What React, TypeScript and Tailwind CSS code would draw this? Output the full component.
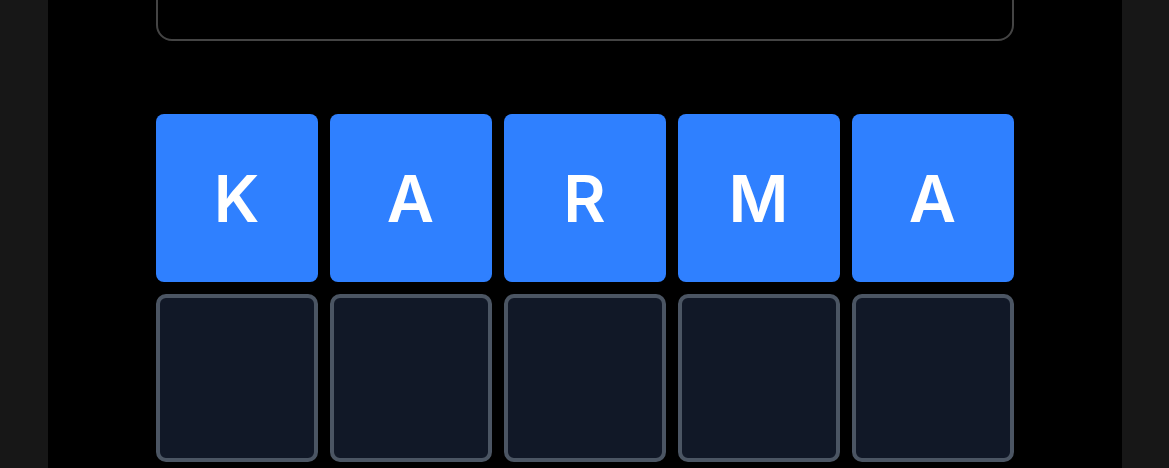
const WORD = ['K', 'A', 'R', 'M', 'A'];

function Tile({ letter }: { letter?: string }) {
  if (letter) {
    return (
      <div className="h-[168px] rounded-lg bg-[#2f80ff] flex items-center justify-center text-white font-semibold text-[65px] leading-none">
        {letter}
      </div>
    );
  }
  return <div className="h-[168px] rounded-[10px] bg-[#111827] border-4 border-[#4b5563]" />;
}

export default function App() {
  return (
    <div className="min-h-screen bg-[#171717] flex justify-center overflow-hidden" style={{ fontFamily: 'Inter, "Noto Sans", sans-serif' }}>
      <div className="w-[1074px] h-[468px] bg-black px-[108px] overflow-hidden">
        {/* hint / message box, scrolled partly out of view */}
        <div className="-mt-[80px] h-[121px] rounded-2xl border-2 border-[#444444]" />

        <div className="mt-[73px] grid grid-cols-5 gap-3">
          {WORD.map((l, i) => (
            <Tile key={i} letter={l} />
          ))}
          {WORD.map((_, i) => (
            <Tile key={`e${i}`} />
          ))}
        </div>
      </div>
    </div>
  );
}
